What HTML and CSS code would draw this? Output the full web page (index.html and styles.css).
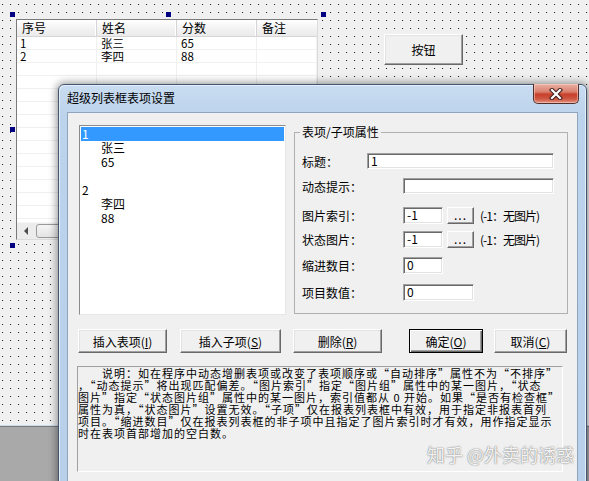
FILE: index.html
```html
<!DOCTYPE html>
<html lang="zh-CN">
<head>
<meta charset="utf-8">
<title>超级列表框表项设置</title>
<link rel="stylesheet" href="styles.css">
</head>
<body>
<div class="screen">
  <div class="surface">
    <span class="handle h-tl"></span>
    <span class="handle h-tm"></span>
    <span class="handle h-tr"></span>
    <span class="handle h-ml"></span>
    <span class="handle h-bl"></span>

    <div class="listview">
      <div class="lv-head">
        <div class="lv-hc c1">序号</div>
        <div class="lv-hc c2">姓名</div>
        <div class="lv-hc c3">分数</div>
        <div class="lv-hc c4">备注</div>
      </div>
      <div class="lv-body">
        <div class="lv-row"><div class="lv-c c1">1</div><div class="lv-c c2">张三</div><div class="lv-c c3">65</div><div class="lv-c c4"></div></div>
        <div class="lv-row"><div class="lv-c c1">2</div><div class="lv-c c2">李四</div><div class="lv-c c3">88</div><div class="lv-c c4"></div></div>
        <div class="lv-row"><div class="lv-c c1"></div><div class="lv-c c2"></div><div class="lv-c c3"></div><div class="lv-c c4"></div></div>
        <div class="lv-row"><div class="lv-c c1"></div><div class="lv-c c2"></div><div class="lv-c c3"></div><div class="lv-c c4"></div></div>
        <div class="lv-row"><div class="lv-c c1"></div><div class="lv-c c2"></div><div class="lv-c c3"></div><div class="lv-c c4"></div></div>
        <div class="lv-row"><div class="lv-c c1"></div><div class="lv-c c2"></div><div class="lv-c c3"></div><div class="lv-c c4"></div></div>
        <div class="lv-row"><div class="lv-c c1"></div><div class="lv-c c2"></div><div class="lv-c c3"></div><div class="lv-c c4"></div></div>
        <div class="lv-row"><div class="lv-c c1"></div><div class="lv-c c2"></div><div class="lv-c c3"></div><div class="lv-c c4"></div></div>
        <div class="lv-row"><div class="lv-c c1"></div><div class="lv-c c2"></div><div class="lv-c c3"></div><div class="lv-c c4"></div></div>
        <div class="lv-row"><div class="lv-c c1"></div><div class="lv-c c2"></div><div class="lv-c c3"></div><div class="lv-c c4"></div></div>
        <div class="lv-row"><div class="lv-c c1"></div><div class="lv-c c2"></div><div class="lv-c c3"></div><div class="lv-c c4"></div></div>
        <div class="lv-row"><div class="lv-c c1"></div><div class="lv-c c2"></div><div class="lv-c c3"></div><div class="lv-c c4"></div></div>
        <div class="lv-row"><div class="lv-c c1"></div><div class="lv-c c2"></div><div class="lv-c c3"></div><div class="lv-c c4"></div></div>
        <div class="lv-row"><div class="lv-c c1"></div><div class="lv-c c2"></div><div class="lv-c c3"></div><div class="lv-c c4"></div></div>
      </div>
      <div class="lv-hscroll">
        <div class="sb-arrow"><span class="tri-left"></span></div>
        <div class="sb-thumb"></div>
      </div>
    </div>

    <div class="btn-canvas">按钮</div>
  </div>
  <div class="workspace"></div>

  <div class="dialog">
    <div class="titlebar">
      <span class="title">超级列表框表项设置</span>
      <span class="close">
        <svg width="14" height="12" viewBox="0 0 14 12">
          <path d="M3 2 L11 10 M11 2 L3 10" stroke="#3a1d18" stroke-width="4.2" stroke-linecap="square" fill="none"/>
          <path d="M3 2 L11 10 M11 2 L3 10" stroke="#ffffff" stroke-width="2.2" stroke-linecap="square" fill="none"/>
        </svg>
      </span>
    </div>
    <div class="client">
      <div class="top-row">
        <div class="listbox">
          <div class="li sel">1</div>
          <div class="li sub">张三</div>
          <div class="li sub">65</div>
          <div class="li"></div>
          <div class="li">2</div>
          <div class="li sub">李四</div>
          <div class="li sub">88</div>
        </div>
        <fieldset class="group">
          <legend>表项/子项属性</legend>
          <div class="frow r1 t"><span class="lbl">标题：</span><span class="field w-title">1</span></div>
          <div class="frow r2"><span class="lbl">动态提示：</span><span class="field w-tip"></span></div>
          <div class="frow r3 tall"><span class="lbl">图片索引：</span><span class="field w-sm">-1</span><span class="dots-btn">...</span><span class="hint">(-1：无图片)</span></div>
          <div class="frow r4 tall"><span class="lbl">状态图片：</span><span class="field w-sm">-1</span><span class="dots-btn">...</span><span class="hint">(-1：无图片)</span></div>
          <div class="frow r5 tall"><span class="lbl">缩进数目：</span><span class="field w-sm">0</span></div>
          <div class="frow r6 tall"><span class="lbl">项目数值：</span><span class="field w-md">0</span></div>
        </fieldset>
      </div>
      <div class="btn-row">
        <span class="btn b1">插入表项(<u>I</u>)</span>
        <span class="btn b2">插入子项(<u>S</u>)</span>
        <span class="btn b3">删除(<u>R</u>)</span>
        <span class="btn b4 def">确定(<u>O</u>)</span>
        <span class="btn b5">取消(<u>C</u>)</span>
      </div>
      <div class="desc">说明：如在程序中动态增删表项或改变了表项顺序或“自动排序”属性不为“不排序”<br>，“动态提示”将出现匹配偏差。“图片索引”指定“图片组”属性中的某一图片，“状态<br>图片”指定“状态图片组”属性中的某一图片，索引值都从 0 开始。如果“是否有检查框”<br>属性为真，“状态图片”设置无效。“子项”仅在报表列表框中有效，用于指定非报表首列<br>项目。“缩进数目”仅在报表列表框的非子项中且指定了图片索引时才有效，用作指定显示<br>时在表项首部增加的空白数。</div>
    </div>
  </div>

  <div class="watermark">知乎 @外卖的诱惑</div>
</div>
</body>
</html>
```

FILE: styles.css
```css
* { box-sizing: border-box; }
html, body { margin: 0; padding: 0; }
body {
  width: 589px;
  height: 481px;
  overflow: hidden;
  background: #ababab;
  font-family: "Noto Sans CJK SC", "Liberation Sans", sans-serif;
  font-size: 12px;
  color: #000;
}
.screen {
  position: relative;
  width: 589px;
  height: 481px;
  overflow: hidden;
}

/* design surface with dotted grid */
.surface {
  position: relative;
  height: 425px;
  background-color: #f0f0f0;
  background-image:
    linear-gradient(90deg, #f0f0f0 7px, transparent 7px),
    linear-gradient(#f0f0f0 7px, #1c1c1c 7px);
  background-size: 8px 8px;
  background-position: 3px 5px;
}
.workspace {
  height: 56px;
  background: #a9a9a9;
  border-top: 1px solid #c9dcee;
  box-shadow: inset 0 1px 0 #7b7b7b;
}

.handle {
  position: absolute;
  width: 5px;
  height: 5px;
  background: #000080;
}
.h-tl { left: 10px; top: 12px; }
.h-tm { left: 166px; top: 12px; }
.h-tr { left: 321px; top: 12px; }
.h-ml { left: 10px; top: 127px; }
.h-bl { left: 10px; top: 243px; }

/* list view on the canvas */
.listview {
  position: absolute;
  left: 16px;
  top: 19px;
  width: 302px;
  height: 221px;
  background: #fff;
  border: 1px solid;
  border-color: #7a7a7a #dcdcdc #dcdcdc #7a7a7a;
  display: flex;
  flex-direction: column;
  overflow: hidden;
}
.lv-head {
  display: flex;
  height: 17px;
  flex: none;
  background: linear-gradient(#ffffff, #f3f3f3 50%, #ebebeb);
  border-bottom: 1px solid #d5d5d5;
}
.lv-hc {
  line-height: 16px;
  padding-left: 5px;
  border-right: 1px solid #d5d5d5;
  box-shadow: inset -1px 0 0 #fff;
}
.c1 { width: 80px; flex: none; }
.c2 { width: 80px; flex: none; }
.c3 { width: 80px; flex: none; }
.c4 { flex: 1; }
.lv-hc.c4 { border-right: none; box-shadow: none; }
.lv-body { flex: 1; min-height: 0; }
.lv-row {
  display: flex;
  height: 13px;
  box-shadow: inset 0 -1px 0 #f0f0f0;
}
.lv-c {
  line-height: 13px;
  font-size: 11.5px;
  padding-left: 4px;
  box-shadow: inset -1px 0 0 #f0f0f0;
}
.lv-c.c1 { padding-left: 3px; }
.lv-hscroll {
  position: relative;
  display: flex;
  height: 17px;
  flex: none;
  background: #ececec;
  border-top: 1px solid #f7f7f7;
}
.sb-arrow {
  width: 17px;
  display: flex;
  align-items: center;
  justify-content: center;
}
.tri-left {
  width: 0;
  height: 0;
  border-top: 4px solid transparent;
  border-bottom: 4px solid transparent;
  border-right: 4px solid #4d4d4d;
}
.sb-thumb {
  flex: 1;
  margin: 1px 0 1px 2px;
  border: 1px solid #9a9a9a;
  border-radius: 3px;
  background: linear-gradient(#f6f6f6, #e4e4e4);
}

.btn-canvas {
  position: absolute;
  left: 384px;
  top: 34px;
  width: 79px;
  height: 31px;
  display: flex;
  align-items: center;
  justify-content: center;
  background: #f0f0f0;
  border: 1px solid;
  border-color: #fff #696969 #696969 #fff;
  box-shadow: inset -1px -1px 0 #a0a0a0, inset 1px 1px 0 #e3e3e3;
  font-size: 12px;
}

/* dialog window */
.dialog {
  position: absolute;
  left: 58px;
  top: 84px;
  width: 529px;
  height: 430px;
  border: 1px solid #42566f;
  border-radius: 6px 6px 0 0;
  background: linear-gradient(#c9dcf1, #bcd3ec 30px, #b7cfe9);
  box-shadow: 0 0 9px 1px rgba(0, 0, 0, 0.45), inset 1px 1px 0 #e4eef8, inset -1px 0 0 #e4eef8;
  padding: 0 8px 8px;
  display: flex;
  flex-direction: column;
}
.titlebar {
  height: 27px;
  flex: none;
  display: flex;
  align-items: flex-start;
}
.title {
  padding-top: 6px;
  line-height: 14px;
  font-size: 12px;
  color: #000;
}
.close {
  margin-left: auto;
  margin-right: -1px;
  margin-top: -1px;
  width: 46px;
  height: 20px;
  border: 1px solid #50302b;
  border-top: none;
  border-radius: 0 0 5px 5px;
  background: linear-gradient(#eab0a2, #d9826f 40%, #c6402c 55%, #cf5a45 80%, #e39785);
  box-shadow: inset 0 0 0 1px rgba(255, 210, 200, 0.55);
  display: flex;
  align-items: center;
  justify-content: center;
}
.close svg { display: block; }

.client {
  flex: 1;
  background: #f0f0f0;
  border: 1px solid #8fa5bf;
  padding: 12px 9px 0 11px;
}
.top-row {
  display: flex;
  gap: 8px;
  height: 190px;
}
.listbox {
  width: 207px;
  height: 190px;
  flex: none;
  background: #fff;
  border: 1px solid;
  border-color: #8c8c8c #e6e6e6 #e6e6e6 #8c8c8c;
  padding: 1px 1px 0 1px;
}
.li {
  height: 14px;
  line-height: 14px;
  padding-left: 1px;
  white-space: nowrap;
}
.li.sub { padding-left: 20px; }
.li.sel { background: #3399ff; color: #fff; }

.group {
  margin: 1px 0 0 0;
  width: 274px;
  height: 188px;
  border: 1px solid #b0b0b0;
  padding: 15px 0 0 7px;
  min-width: 0;
}
.group legend {
  font-size: 12px;
  line-height: 12px;
  padding: 0 2px;
  margin-left: -2px;
}
.frow {
  display: flex;
  align-items: center;
  height: 16px;
}
.frow.tall { height: 17px; }
.r2 { margin-top: 9px; }
.r3 { margin-top: 13px; }
.r4 { margin-top: 7px; }
.r5 { margin-top: 9px; }
.r6 { margin-top: 10px; }
.lbl {
  width: 101px;
  flex: none;
  white-space: nowrap;
}
.frow.t .lbl { width: 65px; }
.field {
  height: 100%;
  flex: none;
  background: #fff;
  border: 1px solid;
  border-color: #a0a0a0 #fff #fff #a0a0a0;
  box-shadow: inset 1px 1px 0 #696969, inset -1px -1px 0 #e3e3e3;
  padding-left: 3px;
  line-height: 14px;
  font-size: 12px;
}
.w-title { width: 187px; }
.w-tip { width: 151px; }
.w-sm { width: 40px; }
.w-md { width: 71px; }
.dots-btn {
  width: 27px;
  height: 17px;
  margin-left: 4px;
  flex: none;
  background: #f0f0f0;
  border: 1px solid;
  border-color: #fff #696969 #696969 #fff;
  box-shadow: inset -1px -1px 0 #a0a0a0;
  text-align: center;
  line-height: 13px;
  letter-spacing: 1px;
}
.hint { margin-left: 6px; white-space: nowrap; letter-spacing: -1px; }

.btn-row {
  display: flex;
  margin-top: 14px;
  margin-left: -1px;
}
.btn {
  height: 24px;
  display: flex;
  align-items: center;
  justify-content: center;
  background: #f0f0f0;
  border: 1px solid;
  border-color: #fff #696969 #696969 #fff;
  box-shadow: inset -1px -1px 0 #a0a0a0, inset 1px 1px 0 #e3e3e3;
  white-space: nowrap;
}
.btn u { text-decoration: underline; }
.btn.def {
  border-color: #000;
  box-shadow: inset 1px 1px 0 #fff, inset -1px -1px 0 #696969, inset -2px -2px 0 #a0a0a0;
}
.b1 { width: 89px; }
.b2 { width: 101px; margin-left: 13px; }
.b3 { width: 89px; margin-left: 12px; }
.b4 { width: 74px; margin-left: 27px; }
.b5 { width: 73px; margin-left: 11px; }

.desc {
  margin-top: 13px;
  margin-left: -2px;
  width: 486px;
  height: 106px;
  border: 1px solid;
  border-color: #a0a0a0 #fff #fff #a0a0a0;
  line-height: 12px;
  font-size: 11px;
  letter-spacing: 1px;
  text-indent: 24px;
  white-space: nowrap;
  overflow: hidden;
}

.watermark {
  position: absolute;
  left: 427px;
  top: 443px;
  font-size: 18px;
  line-height: 22px;
  color: rgba(255, 255, 255, 0.92);
  text-shadow: 0 0 1px rgba(90, 90, 90, 0.8), 0 0 2px rgba(120, 120, 120, 0.6);
  white-space: nowrap;
}
```
